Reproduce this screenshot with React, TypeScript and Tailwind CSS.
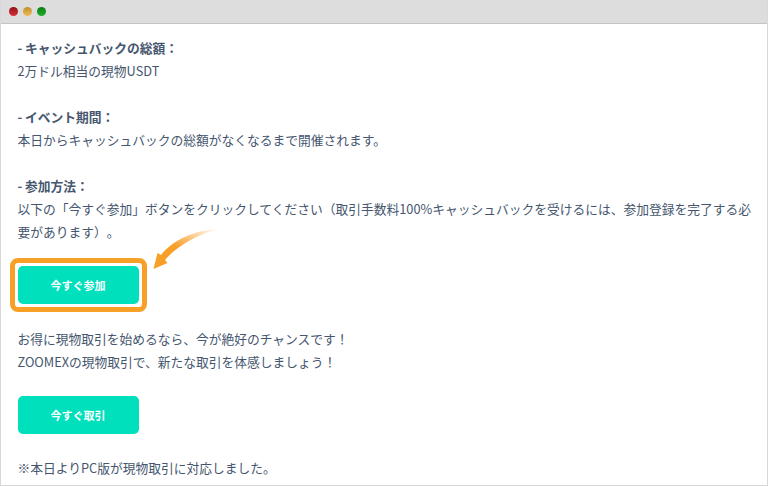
import type { ReactNode } from 'react'

function Dot({ className }: { className: string }) {
  return <span className={`h-[9px] w-[9px] rounded-full ${className}`} />
}

function Btn({ children }: { children: ReactNode }) {
  return (
    <div className="flex h-[38px] w-[121px] items-center justify-center rounded-[5px] bg-[#00e0bd] text-[11px] font-bold text-white">
      {children}
    </div>
  )
}

export default function App() {
  return (
    <div className="h-[486px] w-[768px] overflow-hidden border-x border-b border-[#d8d8d8] bg-white font-['Noto_Sans_CJK_JP','Noto_Sans',sans-serif] text-[12.75px] leading-[23px] text-[#45566e] [text-spacing-trim:space-all]">
      <div className="-mx-px flex h-6 items-center gap-[5px] border-b border-[#c4c4c4] bg-[#dddddd] pl-[9px]">
        <Dot className="bg-gradient-to-b from-[#8f0f18] to-[#e0303a]" />
        <Dot className="bg-gradient-to-b from-[#c08f2c] to-[#eebd58]" />
        <Dot className="bg-gradient-to-b from-[#0a7d14] to-[#1eb02a]" />
      </div>

      <div className="pl-[16.5px] pr-3 pt-[12px]">
        <p className="font-bold">- キャッシュバックの総額：</p>
        <p>2万ドル相当の現物USDT</p>
        <p className="mt-[23px] font-bold">- イベント期間：</p>
        <p>本日からキャッシュバックの総額がなくなるまで開催されます。</p>
        <p className="mt-[23px] font-bold">- 参加方法：</p>
        <p>
          以下の「今すぐ参加」ボタンをクリックしてください（取引手数料100%キャッシュバックを受けるには、参加登録を完了する必要があります）。
        </p>

        <div className="relative mt-[23px] w-[121px]">
          <Btn>今すぐ参加</Btn>
          <div className="absolute -inset-[8px] rounded-[8px] border-[5px] border-[#f79f26]" />
          <svg className="absolute left-[134px] top-[-39px]" width="76" height="46" viewBox="0 0 76 46">
            <defs>
              <linearGradient id="tail" x1="1" y1="0" x2="0" y2="1">
                <stop offset="0" stopColor="#f79f26" stopOpacity="0" />
                <stop offset="0.55" stopColor="#f79f26" />
              </linearGradient>
            </defs>
            <path d="M66 2C44 3 22 12 9 28L5.5 26L1.5 42L15.5 36L13 33C24 20 42 9 66 2Z" fill="url(#tail)" />
          </svg>
        </div>

        <p className="mt-[23px]">お得に現物取引を始めるなら、今が絶好のチャンスです！</p>
        <p>ZOOMEXの現物取引で、新たな取引を体感しましょう！</p>

        <div className="mt-[23px]">
          <Btn>今すぐ取引</Btn>
        </div>

        <p className="mt-[22px]">※本日よりPC版が現物取引に対応しました。</p>
      </div>
    </div>
  )
}
